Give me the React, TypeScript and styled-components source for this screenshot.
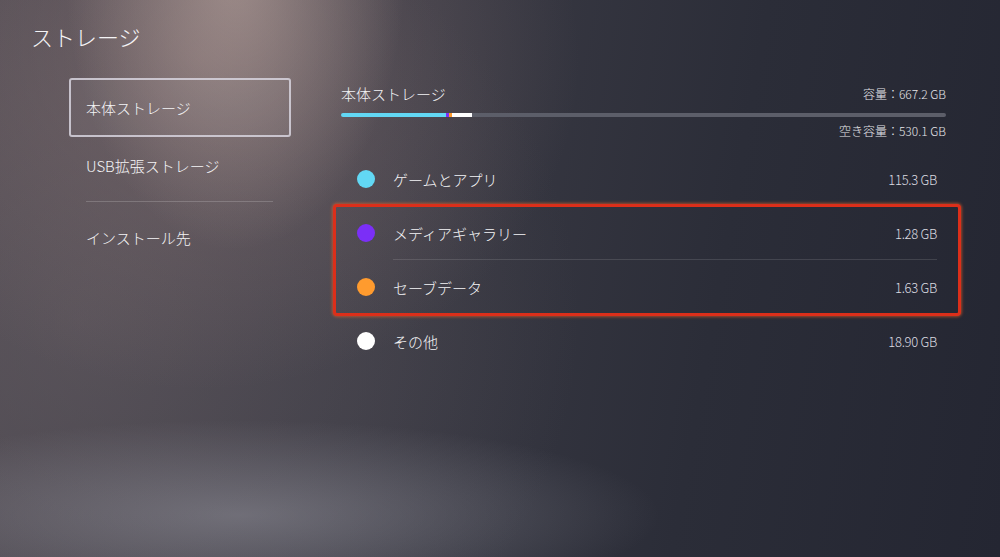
import React from "react";
import styled, { createGlobalStyle } from "styled-components";

const Global = createGlobalStyle`
  html, body { margin: 0; padding: 0; }
  body {
    width: 1000px;
    height: 557px;
    overflow: hidden;
    font-family: "Noto Sans CJK JP", "Noto Sans", sans-serif;
    color: #f2f2f4;
    background:
      radial-gradient(ellipse 170px 280px at 235px -30px, rgba(215,190,180,0.5), rgba(215,190,180,0) 100%),
      radial-gradient(ellipse 380px 330px at 200px 60px, rgba(150,125,125,0.45), rgba(150,125,125,0) 100%),
      radial-gradient(ellipse 420px 95px at 240px 515px, rgba(160,160,170,0.45), rgba(160,160,170,0) 100%),
      radial-gradient(ellipse 500px 450px at 80px 320px, rgba(110,100,105,0.45), rgba(110,100,105,0) 100%),
      linear-gradient(100deg, #4c4850 0%, #3a3a44 40%, #2b2d38 70%, #242632 100%);
  }
`;

const Page = styled.div`
  width: 1000px;
  height: 557px;
  box-sizing: border-box;
  padding: 22px 0 0 31px;
`;

const Title = styled.h1`
  margin: 0;
  font-size: 22px;
  font-weight: 300;
  line-height: 28px;
  color: #f4f4f6;
`;

const Body = styled.div`
  display: grid;
  grid-template-columns: 222px 628px;
  column-gap: 42px;
  margin: 28px 0 0 38px;
`;

const Menu = styled.nav`
  display: flex;
  flex-direction: column;
`;

const MenuItem = styled.div<{ $selected?: boolean }>`
  display: flex;
  align-items: center;
  box-sizing: border-box;
  height: ${(p) => (p.$selected ? "59px" : "56px")};
  font-size: 15px;
  font-weight: 300;
  color: #f4f4f6;
  border: ${(p) => (p.$selected ? "2px solid rgba(215,212,222,0.85)" : "none")};
  border-radius: 3px;
  padding-left: ${(p) => (p.$selected ? "15px" : "17px")};
  background: ${(p) => (p.$selected ? "rgba(255,255,255,0.04)" : "transparent")};
`;

const MenuDivider = styled.div`
  height: 1px;
  margin: 8px 18px 7px 17px;
  background: rgba(255,255,255,0.18);
`;

const Right = styled.section`
  display: flex;
  flex-direction: column;
`;

const Summary = styled.div`
  display: flex;
  flex-direction: column;
  padding: 0 15px 0 8px;
`;

const SummaryTop = styled.div`
  display: flex;
  align-items: center;
  justify-content: space-between;
  height: 30px;
`;

const SummaryTitle = styled.span`
  font-size: 15px;
  font-weight: 300;
`;

const SmallText = styled.span`
  font-size: 12px;
  font-weight: 300;
  color: #e6e6ea;
`;

const Bar = styled.div`
  display: flex;
  height: 4px;
  margin-top: 5px;
  border-radius: 2px;
  overflow: hidden;
  background: #5c5e69;
`;

const Segment = styled.div<{ $color: string }>`
  height: 100%;
  background: ${(p) => p.$color};
`;

const FreeRow = styled.div`
  display: flex;
  justify-content: flex-end;
  align-items: center;
  height: 16px;
  margin-top: 5px;
`;

const List = styled.div`
  display: flex;
  flex-direction: column;
  margin: 14px 2px 0 2px;
`;

const Group = styled.div`
  display: flex;
  flex-direction: column;
  outline: 3px solid #dc2f1a;
  outline-offset: -1px;
  box-shadow: 0 0 3px 3px rgba(235, 95, 40, 0.6);
  border-radius: 2px;
`;

const Row = styled.div<{ $divider?: boolean }>`
  display: flex;
  align-items: center;
  height: 54px;
  padding: 0 22px;
  position: relative;
  ${(p) =>
    p.$divider
      ? `&::after { content: ""; position: absolute; left: 58px; right: 22px; bottom: 0; height: 1px; background: rgba(255,255,255,0.12); }`
      : ""}
`;

const Dot = styled.span<{ $color: string }>`
  width: 18px;
  height: 18px;
  border-radius: 50%;
  background: ${(p) => p.$color};
  flex: none;
`;

const Label = styled.span`
  margin-left: 18px;
  font-size: 15px;
  font-weight: 300;
  flex: 1;
  color: #f4f4f6;
`;

const Value = styled.span`
  font-size: 13px;
  font-weight: 300;
  color: #dcdce2;
  letter-spacing: -0.3px;
`;

const segments = [
  { color: "#62d8f4", pct: 17.3 },
  { color: "#7b2ff7", pct: 0.5 },
  { color: "#ff9b2e", pct: 0.6 },
  { color: "#ffffff", pct: 3.3 },
];

export default function App() {
  return (
    <>
      <Global />
      <Page>
        <Title>ストレージ</Title>
        <Body>
          <Menu>
            <MenuItem $selected>本体ストレージ</MenuItem>
            <MenuItem>USB拡張ストレージ</MenuItem>
            <MenuDivider />
            <MenuItem>インストール先</MenuItem>
          </Menu>
          <Right>
            <Summary>
              <SummaryTop>
                <SummaryTitle>本体ストレージ</SummaryTitle>
                <SmallText>容量：667.2 GB</SmallText>
              </SummaryTop>
              <Bar>
                {segments.map((s, i) => (
                  <Segment key={i} $color={s.color} style={{ width: `${s.pct}%` }} />
                ))}
              </Bar>
              <FreeRow>
                <SmallText>空き容量：530.1 GB</SmallText>
              </FreeRow>
            </Summary>
            <List>
              <Row>
                <Dot $color="#62d8f4" />
                <Label>ゲームとアプリ</Label>
                <Value>115.3 GB</Value>
              </Row>
              <Group>
                <Row $divider>
                  <Dot $color="#7b2ff7" />
                  <Label>メディアギャラリー</Label>
                  <Value>1.28 GB</Value>
                </Row>
                <Row>
                  <Dot $color="#ff9b2e" />
                  <Label>セーブデータ</Label>
                  <Value>1.63 GB</Value>
                </Row>
              </Group>
              <Row>
                <Dot $color="#ffffff" />
                <Label>その他</Label>
                <Value>18.90 GB</Value>
              </Row>
            </List>
          </Right>
        </Body>
      </Page>
    </>
  );
}
